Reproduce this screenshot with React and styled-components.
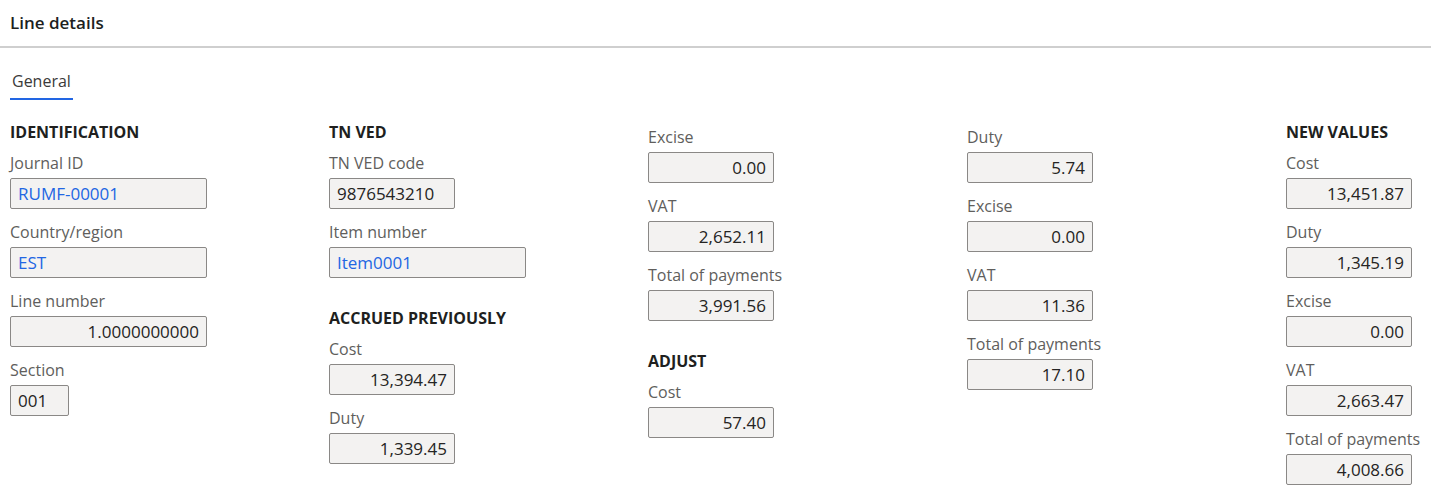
import styled, { createGlobalStyle } from 'styled-components';

const Global = createGlobalStyle`
  html, body {
    margin: 0;
    padding: 0;
    background: #fff;
    font-family: "Open Sans", "Noto Sans", sans-serif;
    color: #323130;
  }
`;

const Page = styled.main`
  width: 1431px;
  height: 495px;
  overflow: hidden;
`;

const TitleBar = styled.header`
  height: 48px;
  display: flex;
  align-items: center;
  padding-left: 10px;
  border-bottom: 2px solid #cfcfcf;
  box-sizing: border-box;
`;

const Title = styled.h1`
  margin: 0;
  font-size: 17px;
  font-weight: 600;
  color: #201f1e;
  padding-bottom: 2px;
`;

const Tabs = styled.nav`
  display: flex;
  height: 54px;
  align-items: flex-start;
  box-sizing: border-box;
  padding: 22px 0 0 10px;
`;

const Tab = styled.div`
  font-size: 16px;
  color: #3b3a39;
  padding: 0 2px 6px 2px;
  line-height: 22px;
  border-bottom: 2.5px solid ${(p) => (p.$active ? '#2266e3' : 'transparent')};
`;

const FormGrid = styled.section`
  display: grid;
  grid-template-columns: repeat(5, 319px);
  padding: 20px 0 0 10px;
`;

const Column = styled.div`
  display: flex;
  flex-direction: column;
  padding-top: ${(p) => (p.$offset ? '5px' : '0')};
`;

const GroupTitle = styled.h2`
  margin: ${(p) => (p.$first ? '0' : '17px')} 0 11px;
  font-size: 16px;
  line-height: 20px;
  font-weight: 700;
  color: #201f1e;
`;

const FieldBox = styled.label`
  display: flex;
  flex-direction: column;
  align-items: flex-start;
  gap: 5px;
  margin-bottom: 13px;
`;

const FieldLabel = styled.span`
  font-size: 16px;
  line-height: 20px;
  color: #605e5c;
`;

const ValueBox = styled.div`
  box-sizing: border-box;
  width: ${(p) => p.$w}px;
  height: 31px;
  padding: 0 7px;
  border: 1px solid #8a8886;
  border-radius: 2px;
  background: #f3f2f1;
  font-size: 17px;
  line-height: 29px;
  white-space: nowrap;
  text-align: ${(p) => (p.$num ? 'right' : 'left')};
  color: ${(p) => (p.$link ? '#2266e3' : '#252423')};
`;

function Field({ label, value, w = 126, num, link }) {
  return (
    <FieldBox>
      <FieldLabel>{label}</FieldLabel>
      <ValueBox $w={w} $num={num} $link={link}>
        {value}
      </ValueBox>
    </FieldBox>
  );
}

export default function App() {
  return (
    <Page>
      <Global />
      <TitleBar>
        <Title>Line details</Title>
      </TitleBar>
      <Tabs>
        <Tab $active>General</Tab>
      </Tabs>
      <FormGrid>
        <Column>
          <GroupTitle $first>IDENTIFICATION</GroupTitle>
          <Field label="Journal ID" value="RUMF-00001" w={197} link />
          <Field label="Country/region" value="EST" w={197} link />
          <Field label="Line number" value="1.0000000000" w={197} num />
          <Field label="Section" value="001" w={59} />
        </Column>
        <Column>
          <GroupTitle $first>TN VED</GroupTitle>
          <Field label="TN VED code" value="9876543210" />
          <Field label="Item number" value="Item0001" w={197} link />
          <GroupTitle>ACCRUED PREVIOUSLY</GroupTitle>
          <Field label="Cost" value="13,394.47" num />
          <Field label="Duty" value="1,339.45" num />
        </Column>
        <Column $offset>
          <Field label="Excise" value="0.00" num />
          <Field label="VAT" value="2,652.11" num />
          <Field label="Total of payments" value="3,991.56" num />
          <GroupTitle>ADJUST</GroupTitle>
          <Field label="Cost" value="57.40" num />
        </Column>
        <Column $offset>
          <Field label="Duty" value="5.74" num />
          <Field label="Excise" value="0.00" num />
          <Field label="VAT" value="11.36" num />
          <Field label="Total of payments" value="17.10" num />
        </Column>
        <Column>
          <GroupTitle $first>NEW VALUES</GroupTitle>
          <Field label="Cost" value="13,451.87" num />
          <Field label="Duty" value="1,345.19" num />
          <Field label="Excise" value="0.00" num />
          <Field label="VAT" value="2,663.47" num />
          <Field label="Total of payments" value="4,008.66" num />
        </Column>
      </FormGrid>
    </Page>
  );
}
